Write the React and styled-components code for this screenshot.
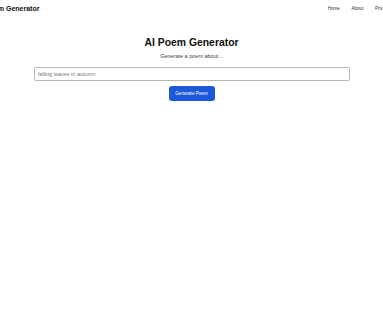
import React, { useState } from 'react';
import styled, { createGlobalStyle } from 'styled-components';

const GlobalStyle = createGlobalStyle`
  html, body {
    margin: 0;
    padding: 0;
    background: #ffffff;
    overflow: hidden;
  }
  body {
    font-family: "Liberation Sans", Arial, sans-serif;
    color: #111111;
  }
`;

const Page = styled.div`
  width: 383px;
  height: 328px;
  overflow: hidden;
  background: #ffffff;
`;

// header is wider than the window, so the logo and the last link get cut off
const Header = styled.header`
  display: flex;
  align-items: center;
  justify-content: space-between;
  height: 17px;
  margin: 0 -7px 0 -24px;
`;

const Logo = styled.div`
  font-size: 7px;
  font-weight: bold;
  color: #111111;
  white-space: nowrap;
`;

const Nav = styled.nav`
  display: flex;
  gap: 11.5px;
`;

const NavLink = styled.a`
  font-size: 4.6px;
  color: #333333;
  text-decoration: none;
  white-space: nowrap;
  cursor: pointer;
`;

const Main = styled.main`
  display: flex;
  flex-direction: column;
  align-items: center;
  padding: 19.5px 33.5px 0;
`;

const Title = styled.h1`
  margin: 0;
  font-size: 10.4px;
  font-weight: bold;
  color: #111111;
`;

const Subtitle = styled.p`
  margin: 5px 0 0;
  font-size: 5.5px;
  color: #444444;
`;

const Input = styled.input`
  box-sizing: border-box;
  width: 100%;
  height: 14px;
  margin-top: 8px;
  padding: 0 3.3px;
  border: 1px solid #b8b8b8;
  border-radius: 1.5px;
  font-family: inherit;
  font-size: 5.5px;
  color: #222222;
  background: #ffffff;

  &::placeholder {
    color: #777777;
  }

  &:focus {
    outline: none;
  }
`;

const Button = styled.button`
  box-sizing: border-box;
  width: 46px;
  height: 15px;
  margin-top: 5px;
  padding: 0;
  border: none;
  border-radius: 3px;
  background-color: #1d58d8;
  color: #ffffff;
  font-family: inherit;
  font-size: 4.6px;
  cursor: pointer;

  &:hover {
    background-color: #1a4fc4;
  }
`;

export default function App() {
  const [topic, setTopic] = useState('');

  return (
    <Page>
      <GlobalStyle />
      <Header>
        <Logo>AI Poem Generator</Logo>
        <Nav>
          <NavLink>Home</NavLink>
          <NavLink>About</NavLink>
          <NavLink>Privacy</NavLink>
        </Nav>
      </Header>
      <Main>
        <Title>AI Poem Generator</Title>
        <Subtitle>Generate a poem about...</Subtitle>
        <Input
          type="text"
          placeholder="falling leaves in autumn"
          value={topic}
          onChange={(e) => setTopic(e.target.value)}
        />
        <Button type="button">Generate Poem</Button>
      </Main>
    </Page>
  );
}
